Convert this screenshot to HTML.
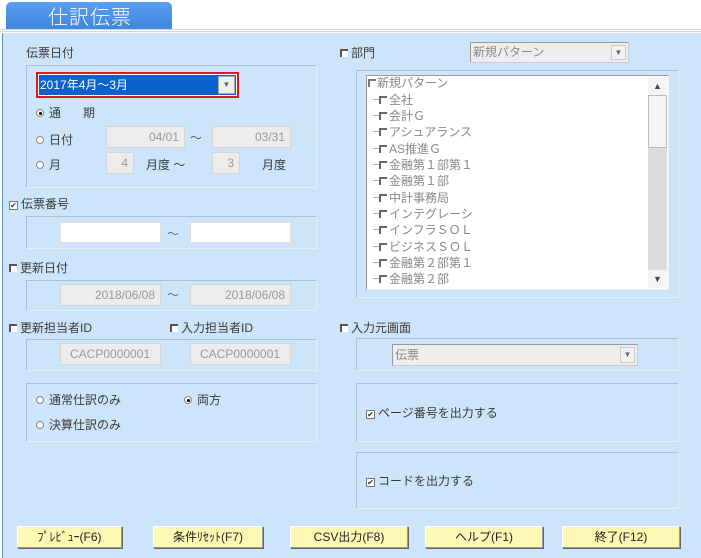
<!DOCTYPE html>
<html><head><meta charset="utf-8"><style>
*{box-sizing:border-box;margin:0;padding:0}
body{width:701px;height:558px;overflow:hidden;background:#fff;position:relative;font-family:"Liberation Sans","Noto Sans CJK JP",sans-serif;font-size:12px;color:#3a3a3a}
.a{position:absolute}
.frame{left:2px;top:33px;width:699px;height:525px;background:#cde5fa;border-left:1px solid #5a8cc0;border-top:1px solid #d8e4f0}
.line{left:0;width:701px;height:1px;background:#c8d8e8}
.tab{left:6px;top:2px;width:166px;height:27px;background:linear-gradient(#5a9ff0,#3f86dc);border-radius:5px 5px 0 0;color:#fff;font-size:20px;line-height:27px;padding-left:42px;letter-spacing:1px;font-family:"Noto Sans CJK JP",sans-serif;font-weight:300}
.box{border:1px solid #a9c0d6;border-right-color:#e6f0fa;border-bottom-color:#e6f0fa}
.inp{background:#ededed;border:1px solid #d6d6d6;text-align:right;color:#999;padding-right:5px;line-height:20px;height:22px}
.w{background:#fff;border:1px solid #e0e0e0}
.cb{display:inline-block;width:8px;height:8px;border-left:2px solid #555;border-top:2px solid #555;background:#fff;margin-right:3px;vertical-align:0}
.cbk{display:inline-block;width:9px;height:9px;background:#fff;border:1px solid #777;margin-right:3px;font-size:8px;line-height:7px;text-align:center;vertical-align:0}
.rd{display:inline-block;width:8px;height:8px;border-radius:50%;border:1px solid #888;background:#fff;margin-right:5px;position:relative;vertical-align:0}
.rd.on:after{content:"";position:absolute;left:2px;top:2px;width:3px;height:3px;border-radius:50%;background:#000}
.btn{top:526px;height:22px;background:#fcf7b2;border:1px solid #999;border-top-color:#fff;border-left-color:#fff;box-shadow:1px 1px 0 #666;text-align:center;line-height:20px;font-size:12px;color:#222}
.li{left:373px;color:#888;font-size:12px;line-height:14px}
.li:before{content:"";display:inline-block;width:6px;border-top:1px solid #aaa;margin-right:0;vertical-align:4px}
.dd{background:#fff;border:1px solid #aaa;color:#666;font-size:8px;text-align:center}
</style></head><body>
<div class="a line" style="top:29px"></div><div class="a line" style="top:31px"></div>
<div class="a tab">仕訳伝票</div>
<div class="a frame"></div>

<div class="a" style="left:26px;top:44px">伝票日付</div>
<div class="a box" style="left:26px;top:65px;width:291px;height:123px"></div>
<div class="a" style="left:36px;top:72px;width:203px;height:26px;border:2px solid #d02020;background:#fff;padding:1px"><div style="background:#0a62d0;color:#fff;height:20px;line-height:20px;font-size:12px;padding-left:1px">2017年4月～3月</div><div class="a dd" style="right:2px;top:2px;width:17px;height:18px;line-height:16px;background:#f0f0f0">▼</div></div>
<div class="a" style="left:36px;top:104px"><span class="rd on"></span>通　&nbsp;&nbsp;&nbsp;期</div>
<div class="a" style="left:36px;top:131px"><span class="rd"></span>日付</div>
<div class="a inp" style="left:106px;top:126px;width:79px">04/01</div>
<div class="a" style="left:190px;top:129px;color:#555">～</div>
<div class="a inp" style="left:212px;top:126px;width:79px">03/31</div>
<div class="a" style="left:36px;top:156px"><span class="rd"></span>月</div>
<div class="a inp" style="left:106px;top:152px;width:28px">4</div>
<div class="a" style="left:146px;top:156px">月度 ～</div>
<div class="a inp" style="left:212px;top:152px;width:28px">3</div>
<div class="a" style="left:262px;top:156px">月度</div>

<div class="a" style="left:9px;top:195px"><span class="cbk">✔</span>伝票番号</div>
<div class="a box" style="left:26px;top:216px;width:291px;height:33px"></div>
<div class="a w" style="left:60px;top:222px;width:101px;height:21px"></div>
<div class="a" style="left:167px;top:225px;color:#666">～</div>
<div class="a w" style="left:190px;top:222px;width:101px;height:21px"></div>

<div class="a" style="left:9px;top:259px"><span class="cb"></span>更新日付</div>
<div class="a box" style="left:26px;top:280px;width:291px;height:31px"></div>
<div class="a inp" style="left:60px;top:284px;width:101px">2018/06/08</div>
<div class="a" style="left:167px;top:286px;color:#666">～</div>
<div class="a inp" style="left:190px;top:284px;width:101px">2018/06/08</div>

<div class="a" style="left:9px;top:319px"><span class="cb"></span>更新担当者ID</div>
<div class="a" style="left:170px;top:319px"><span class="cb"></span>入力担当者ID</div>
<div class="a box" style="left:26px;top:339px;width:291px;height:32px"></div>
<div class="a inp" style="left:60px;top:343px;width:101px;text-align:left;padding-left:9px">CACP0000001</div>
<div class="a inp" style="left:190px;top:343px;width:101px;text-align:left;padding-left:9px">CACP0000001</div>

<div class="a box" style="left:26px;top:383px;width:291px;height:59px"></div>
<div class="a" style="left:36px;top:391px"><span class="rd"></span>通常仕訳のみ</div>
<div class="a" style="left:184px;top:391px"><span class="rd on"></span>両方</div>
<div class="a" style="left:36px;top:416px"><span class="rd"></span>決算仕訳のみ</div>

<div class="a" style="left:340px;top:44px"><span class="cb"></span>部門</div>
<div class="a" style="left:470px;top:42px;width:159px;height:21px;background:#eee;border:1px solid #999;border-right-color:#ccc;border-bottom-color:#ccc;color:#888;line-height:19px;padding-left:2px">新規パターン<div class="a dd" style="right:2px;top:2px;width:15px;height:15px;line-height:13px;background:#f2f2f2;border-color:#ccc">▼</div></div>
<div class="a box" style="left:356px;top:70px;width:323px;height:228px"></div>
<div class="a" style="left:366px;top:75px;width:303px;height:215px;background:#fff;border:1px solid #999;border-right-color:#eee;border-bottom-color:#eee"></div>
<div class="a" style="left:648px;top:77px;width:19px;height:211px;background:#ddd"></div>
<div class="a" style="left:648px;top:77px;width:19px;height:18px;background:#f4f4f4;text-align:center;font-size:9px;line-height:18px;color:#444">▲</div>
<div class="a" style="left:648px;top:95px;width:19px;height:53px;background:#f4f4f4;border:1px solid #bbb"></div>
<div class="a" style="left:648px;top:270px;width:19px;height:18px;background:#f4f4f4;text-align:center;font-size:9px;line-height:18px;color:#444">▼</div>
<div class="a" style="left:368px;top:76px;color:#888;line-height:14px"><span class="cb" style="border-color:#777;margin-right:1px"></span>新規パターン</div>
<div class="a li" style="top:93px"><span class="cb" style="border-color:#666;margin-right:2px"></span>全社</div>
<div class="a li" style="top:109px"><span class="cb" style="border-color:#666;margin-right:2px"></span>会計Ｇ</div>
<div class="a li" style="top:125px"><span class="cb" style="border-color:#666;margin-right:2px"></span>アシュアランス</div>
<div class="a li" style="top:142px"><span class="cb" style="border-color:#666;margin-right:2px"></span>AS推進Ｇ</div>
<div class="a li" style="top:158px"><span class="cb" style="border-color:#666;margin-right:2px"></span>金融第１部第１</div>
<div class="a li" style="top:174px"><span class="cb" style="border-color:#666;margin-right:2px"></span>金融第１部</div>
<div class="a li" style="top:191px"><span class="cb" style="border-color:#666;margin-right:2px"></span>中計事務局</div>
<div class="a li" style="top:207px"><span class="cb" style="border-color:#666;margin-right:2px"></span>インテグレーシ</div>
<div class="a li" style="top:223px"><span class="cb" style="border-color:#666;margin-right:2px"></span>インフラＳＯＬ</div>
<div class="a li" style="top:240px"><span class="cb" style="border-color:#666;margin-right:2px"></span>ビジネスＳＯＬ</div>
<div class="a li" style="top:256px"><span class="cb" style="border-color:#666;margin-right:2px"></span>金融第２部第１</div>
<div class="a li" style="top:272px"><span class="cb" style="border-color:#666;margin-right:2px"></span>金融第２部</div>

<div class="a" style="left:340px;top:319px"><span class="cb"></span>入力元画面</div>
<div class="a box" style="left:356px;top:338px;width:323px;height:33px"></div>
<div class="a" style="left:392px;top:344px;width:246px;height:22px;background:#eee;border:1px solid #999;border-right-color:#ccc;border-bottom-color:#ccc;color:#888;line-height:20px;padding-left:2px">伝票<div class="a dd" style="right:2px;top:2px;width:15px;height:16px;line-height:14px;background:#f2f2f2;border-color:#ccc">▼</div></div>

<div class="a box" style="left:356px;top:383px;width:323px;height:59px"></div>
<div class="a" style="left:366px;top:404px"><span class="cbk">✔</span>ページ番号を出力する</div>
<div class="a box" style="left:356px;top:452px;width:323px;height:57px"></div>
<div class="a" style="left:366px;top:472px"><span class="cbk">✔</span>コードを出力する</div>

<div class="a btn" style="left:17px;width:105px">ﾌﾟﾚﾋﾞｭｰ(F6)</div>
<div class="a btn" style="left:153px;width:110px">条件ﾘｾｯﾄ(F7)</div>
<div class="a btn" style="left:290px;width:118px">CSV出力(F8)</div>
<div class="a btn" style="left:425px;width:118px">ヘルプ(F1)</div>
<div class="a btn" style="left:562px;width:118px">終了(F12)</div>
</body></html>
